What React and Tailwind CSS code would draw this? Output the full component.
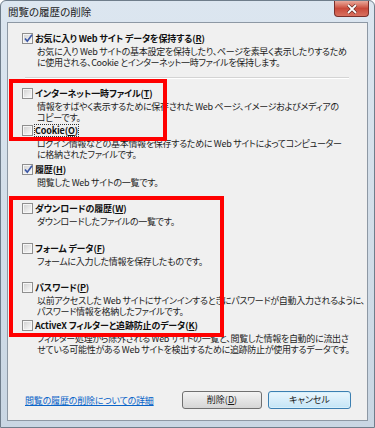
import React from "react";

const F = "font-['Noto_Sans_CJK_JP','Noto_Sans',sans-serif] [font-feature-settings:'palt']";

function Box({ checked }) {
  return (
    <span className="relative w-[11px] h-[11px] shrink-0 border border-[#8f8f8f] bg-[#f6f6f6]">
      <span className="absolute inset-[1px] bg-gradient-to-br from-[#d4d4d4] to-[#f8f8f8]" />
      {checked && (
        <svg className="absolute left-[0px] top-[-1px]" width="11" height="11" viewBox="0 0 11 11">
          <path d="M2 5.5 L4.3 8.2 L9 1.8" fill="none" stroke="#3b57a6" strokeWidth="1.7" />
        </svg>
      )}
    </span>
  );
}

function Item({ h, checked, label, lines, focus }) {
  return (
    <div className={`flex flex-col ${h}`}>
      <div className="flex items-center h-[11px] gap-[2px]">
        <Box checked={checked} />
        <span
          className={`font-bold text-[9px] tracking-[-0.15px] leading-[11px] text-[#111] whitespace-nowrap ${
            focus ? "outline outline-1 outline-dotted outline-[#333] outline-offset-0" : ""
          }`}
        >
          {label}
        </span>
      </div>
      <div className="pl-[15px] mt-[2px] text-[9px] tracking-[-0.3px] leading-[11px] text-[#1c1c1c]">
        {lines.map((l, i) => (
          <div key={i} className="whitespace-nowrap">
            {l}
          </div>
        ))}
      </div>
    </div>
  );
}

const K = ({ c }) => (
  <>
    (<span className="underline">{c}</span>)
  </>
);

export default function App() {
  return (
    <div className={`${F} w-[375px] h-[428px] flex flex-col bg-gradient-to-b from-[#dce6f0] via-[#d3dee9] to-[#c9d6e3] border border-[#6f7d8b] rounded-t-[6px] overflow-hidden`}>
      <div className="h-[21px] shrink-0 flex items-start justify-between">
        <div className="pl-[7px] pt-[4px] text-[10.5px] leading-[13px] text-[#1a1a1a]">閲覧の履歴の削除</div>
        <div className="mr-[5px] w-[35px] h-[16px] rounded-b-[4px] border border-t-0 border-[#7a2f2a] bg-gradient-to-b from-[#e9a99c] via-[#c9493a] to-[#d8705f] flex items-center justify-center">
          <svg width="12" height="10" viewBox="0 0 12 10">
            <path d="M2 1 L10 9 M10 1 L2 9" stroke="#4a1a14" strokeWidth="3" />
            <path d="M2 1 L10 9 M10 1 L2 9" stroke="#ffffff" strokeWidth="1.8" />
          </svg>
        </div>
      </div>
      <div className="relative flex-1 mx-[6px] mb-[6px] border border-[#8d98a4] bg-[#f0f0f0] flex flex-col">
        <div className="pt-[10px] pl-[14px] flex flex-col">
          <Item
            h="h-[44px]"
            checked
            label={<>お気に入り Web サイト データを保持する<K c="R" /></>}
            lines={[
              "お気に入り Web サイトの基本設定を保持したり、ページを素早く表示したりするため",
              "に使用される、Cookie とインターネット一時ファイルを保持します。",
            ]}
          />
          <div className="ml-[3px] mr-[18px] h-[2px] border-t border-[#d4d4d4] border-b border-b-white" />
          <div className="h-[9px]" />
          <Item
            h="h-[37px]"
            label={<>インターネット一時ファイル<K c="T" /></>}
            lines={[
              "情報をすばやく表示するために保存された Web ページ、イメージおよびメディアの",
              "コピーです。",
            ]}
          />
          <Item
            h="h-[39px]"
            focus
            label={<>Cookie<K c="O" /></>}
            lines={[
              "ログイン情報などの基本情報を保存するために Web サイトによってコンピューター",
              "に格納されたファイルです。",
            ]}
          />
          <Item h="h-[39px]" checked label={<>履歴<K c="H" /></>} lines={["閲覧した Web サイトの一覧です。"]} />
          <Item
            h="h-[40px]"
            label={<>ダウンロードの履歴<K c="W" /></>}
            lines={["ダウンロードしたファイルの一覧です。"]}
          />
          <Item
            h="h-[39px]"
            label={<>フォーム データ<K c="F" /></>}
            lines={["フォームに入力した情報を保存したものです。"]}
          />
          <Item
            h="h-[38px]"
            label={<>パスワード<K c="P" /></>}
            lines={[
              "以前アクセスした Web サイトにサインインするときにパスワードが自動入力されるように、",
              "パスワード情報を格納したファイルです。",
            ]}
          />
          <Item
            h="h-[36px]"
            label={<>ActiveX フィルターと追跡防止のデータ<K c="K" /></>}
            lines={[
              "フィルター処理から除外される Web サイトの一覧と、閲覧した情報を自動的に流出さ",
              "せている可能性がある Web サイトを検出するために追跡防止が使用するデータです。",
            ]}
          />
        </div>
        <div className="mt-auto pb-[11px] pl-[17px] pr-[16px] flex items-center">
          <span className="text-[9px] tracking-[-0.2px] leading-[11px] text-[#0a64c8] underline">閲覧の履歴の削除についての詳細</span>
          <div className="ml-auto flex gap-[6px]">
            <div className="w-[80px] h-[18px] rounded-[3px] border border-[#707070] bg-gradient-to-b from-[#f3f3f3] to-[#d6d6d6] flex items-center justify-center text-[9px] text-[#1a1a1a]">
              削除<K c="D" />
            </div>
            <div className="w-[83px] h-[18px] rounded-[3px] border border-[#3c7fb1] bg-gradient-to-b from-[#eaf6fd] to-[#c4e5f6] shadow-[inset_0_0_0_1px_#d8f0fb] flex items-center justify-center text-[9px] text-[#1a1a1a]">
              キャンセル
            </div>
          </div>
        </div>
        <div className="absolute left-[1px] top-[56px] w-[158px] h-[62px] border-4 border-[#ff0000]" />
        <div className="absolute left-[1px] top-[173px] w-[215px] h-[141px] border-4 border-[#ff0000]" />
      </div>
    </div>
  );
}
